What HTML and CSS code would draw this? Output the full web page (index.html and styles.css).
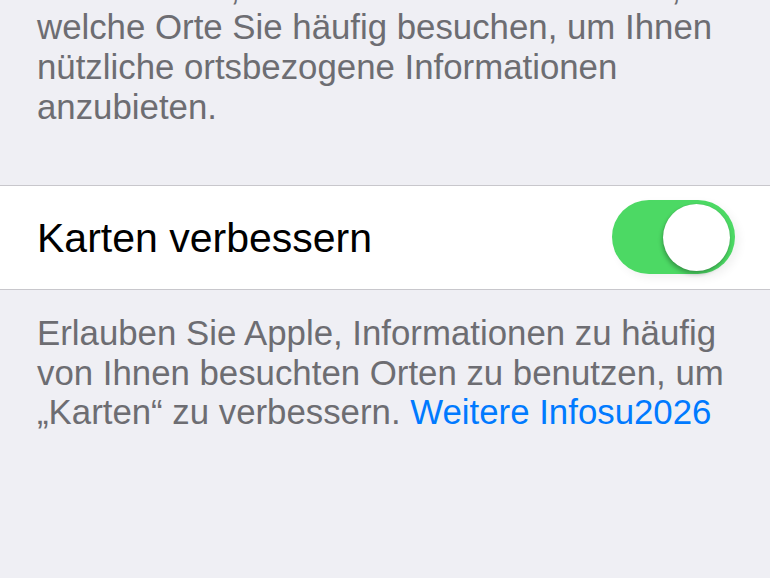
FILE: index.html
```html
<!DOCTYPE html>
<html lang="de">
<head>
  <meta charset="UTF-8" />
  <title>Häufige Orte</title>
  <meta name="viewport" content="width=device-width, initial-scale=1.0">
  <link rel="stylesheet" href="styles.css">
</head>
<body>
  <p class="footer-text intro">
    Ihr Mac lernt, wo Sie sich meist aufhalten,
    welche Orte Sie häufig besuchen, um Ihnen nützliche ortsbezogene Informationen anzubieten.
  </p>

  <div class="group">
    <div class="cell">
      <span class="cell-label">Karten verbessern</span>
      <div class="switch on">
        <div class="knob"></div>
      </div>
    </div>
  </div>

  <p class="footer-text">
    Erlauben Sie Apple, Informationen zu häufig von Ihnen besuchten Orten zu benutzen, um
    „Karten“ zu verbessern. <a href="#" class="more">Weitere Infosu2026</a>
  </p>
</body>
</html>
```

FILE: styles.css
```css
html, body {
  margin: 0;
  padding: 0;
}

body {
  font-family: "Liberation Sans", Arial, sans-serif;
  background-color: #efeff4;
  width: 770px;
  height: 578px;
  overflow: hidden;
}

.footer-text {
  font-size: 34.8px;
  line-height: 39.7px;
  color: #6d6d72;
  margin: 0;
  padding: 0 16px 0 37px;
}

.intro {
  margin-top: -32.5px;
}

.group {
  margin-top: 58.7px;
  margin-bottom: 23px;
  background: #fff;
  border-top: 1px solid #c8c7cc;
  border-bottom: 1px solid #c8c7cc;
}

.cell {
  height: 103px;
  display: flex;
  align-items: center;
  justify-content: space-between;
  padding: 0 35px 0 37px;
}

.cell-label {
  font-size: 41px;
  line-height: 46px;
  color: #000;
  margin-top: 1px;
}

.switch {
  width: 123px;
  height: 74px;
  border-radius: 37px;
  background: #4cd964;
  box-sizing: border-box;
  padding: 4px 5px;
  display: flex;
  justify-content: flex-end;
  margin-top: -2px;
  box-shadow: 4px 4px 10px rgba(0,0,0,0.06);
}

.knob {
  width: 67px;
  height: 67px;
  border-radius: 50%;
  background: #fff;
  box-shadow: -1px 3px 4px rgba(0,0,0,0.28), 0 0 1px rgba(0,0,0,0.2);
}

.more {
  color: #007aff;
  text-decoration: none;
}
```
